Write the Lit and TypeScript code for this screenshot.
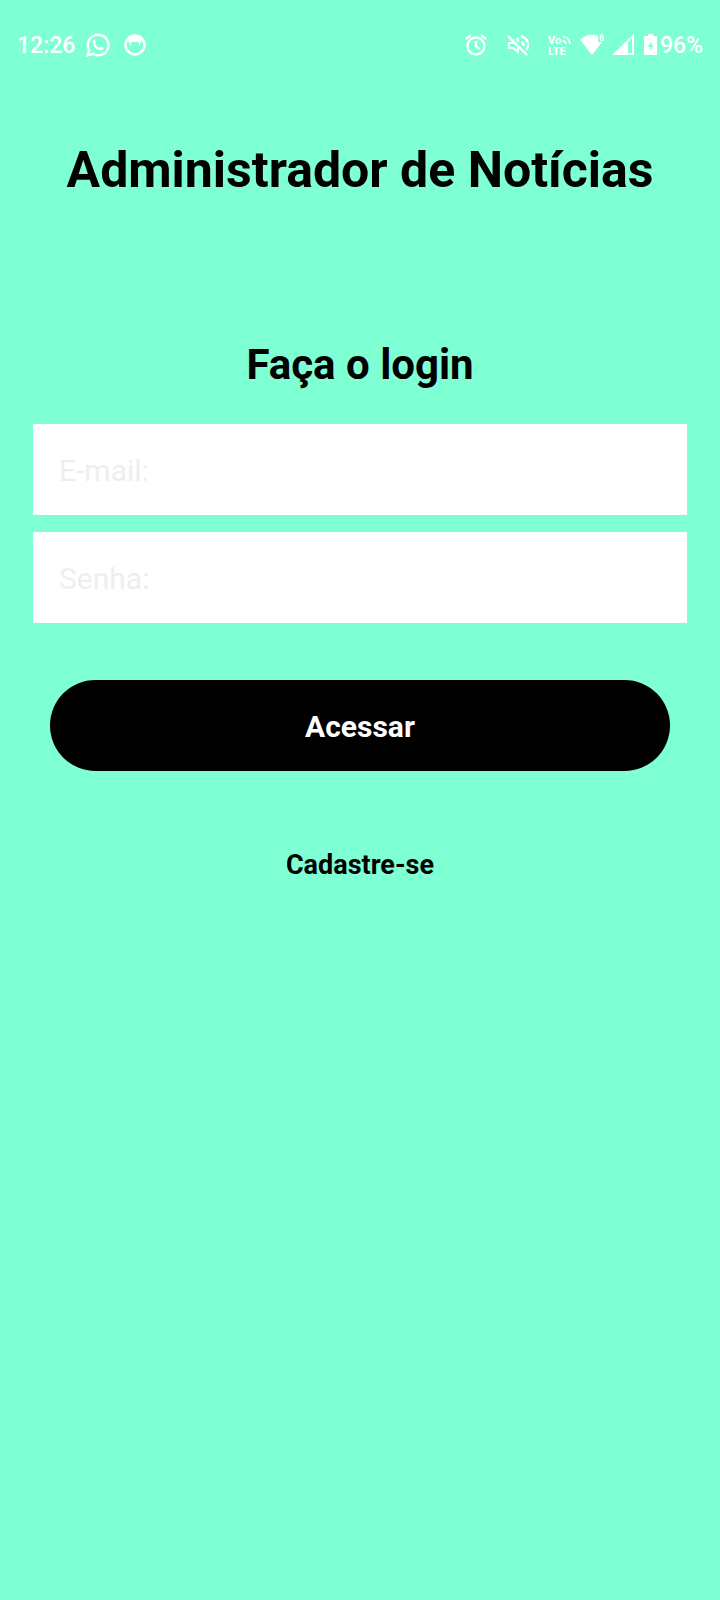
import { LitElement, html, css } from "lit";
import { customElement } from "lit/decorators.js";

@customElement("status-bar")
class StatusBar extends LitElement {
  static styles = css`
    :host {
      display: flex;
      justify-content: space-between;
      align-items: center;
      height: 90px;
      padding: 0 17px;
      box-sizing: border-box;
      color: #fff;
      font: 500 23px/28px Roboto, sans-serif;
    }
    .group {
      display: flex;
      align-items: center;
    }
    .left {
      gap: 11px;
    }
    .label {
      padding-top: 2px;
    }
    .left .icon + .icon {
      margin-left: 2px;
    }
    .icon {
      display: block;
      width: 24px;
      height: 24px;
      fill: none;
      stroke: #fff;
      stroke-width: 2.4;
    }
    .solid {
      fill: #fff;
      stroke: none;
    }
    .spaced {
      margin-right: 18px;
    }
    .near {
      margin-right: 8px;
    }
    .narrow {
      width: 16px;
      margin: 0 1px 0 7px;
    }
    .small {
      font: 700 11px Roboto, sans-serif;
    }
    .tiny {
      font: 700 9px Roboto, sans-serif;
    }
  `;

  render() {
    return html`
      <div class="group left">
        <span class="label">12:26</span>
        <svg class="icon" viewBox="0 0 24 24" aria-hidden="true">
          <path d="M1.600 22.400 L3.200 17 A10.300 10.300 0 1 1 7 20.900 Z" />
          <path class="solid" d="M8.7 6.5 C8 6.3 6.5 7.4 6.5 9.2 C6.6 12.8 11.5 17.3 15 17.3 C16.7 17.2 17.8 16 17.7 14.7 L14.9 13.3 L13.5 15 C11.6 14.2 9.9 12.6 9 10.8 L10.1 9.4 Z" />
        </svg>
        <svg class="icon" viewBox="0 0 24 24" aria-hidden="true">
          <circle cx="12" cy="12" r="9.5" />
          <path class="solid" d="M5 4.500 Q12 -1 19 4.500 L18.500 9.500 Q15.500 10 14 8.500 Q12 10 10 8.500 Q8.500 10 5.500 9.500 Z" />
          <path stroke-width="1" d="M7.500 9 V12.500 M16.500 9 V12.500" />
        </svg>
      </div>
      <div class="group">
        <svg class="icon spaced" viewBox="0 0 24 24" aria-hidden="true">
          <circle cx="12" cy="13" r="8.500" />
          <path d="M12 8 V13.500 L15.500 16 M2 6 L7 2 M17 2 L22 6" />
        </svg>
        <svg class="icon spaced" viewBox="0 0 24 24" aria-hidden="true">
          <path d="M2 3 L21 22" />
          <path stroke-width="2" d="M8.500 10 H3 V15 H7.500 L12 19 V14" />
          <path class="solid" d="M9.500 6.500 L13 3.500 V10 Z" />
          <path d="M15.500 8.500 Q17.500 10 17.500 13 M15 3 Q22 5.500 22 12 Q22 14.500 20.500 17" />
        </svg>
        <svg class="icon near" viewBox="0 0 24 24" aria-hidden="true">
          <text class="solid small" x="0" y="11">Vo</text>
          <text class="solid small" x="0" y="22">LTE</text>
          <path stroke-width="1.500" d="M14.500 7.500 Q17.500 8 18 11 M15 3.500 Q21.500 4.500 22 11" />
        </svg>
        <svg class="icon near" viewBox="0 0 24 24" aria-hidden="true">
          <path class="solid" d="M0 6.500 Q8 0 18 2.500 V9 H22 L12 22 Z" />
          <text class="solid tiny" x="19" y="8">6</text>
        </svg>
        <svg class="icon" viewBox="0 0 24 24" aria-hidden="true">
          <path class="solid" fill-rule="evenodd" d="M0 22 L22 1 V22 Z M16 9 V20 H20 V5 Z" />
        </svg>
        <svg class="icon narrow" viewBox="0 0 16 24" aria-hidden="true">
          <path class="solid" fill-rule="evenodd" d="M5 1 H10 V3 H13 Q14 3 14 4 V21 Q14 22 13 22 H2 Q1 22 1 21 V4 Q1 3 2 3 H5 Z M8.500 8 L5 14 H7 V18 L10.500 12 H8.500 Z" />
        </svg>
        <span class="label">96%</span>
      </div>
    `;
  }
}

@customElement("app-root")
class AppRoot extends LitElement {
  static styles = css`
    :host {
      display: block;
      min-height: 100vh;
      background: #7fffd4;
      color: #000;
      font-family: Roboto, sans-serif;
    }
    .content {
      display: flex;
      flex-direction: column;
      align-items: center;
      padding: 51px 33px;
    }
    h1,
    h2 {
      margin: 0;
      font-weight: 700;
      text-align: center;
    }
    h1 {
      font-size: 50px;
      line-height: 58px;
    }
    h2 {
      margin-top: 141px;
      font-size: 42px;
      line-height: 50px;
    }
    form {
      display: flex;
      flex-direction: column;
      align-self: stretch;
      gap: 17px;
      margin-top: 34px;
    }
    input,
    button {
      height: 91px;
      box-sizing: border-box;
      border: 0;
      font-family: inherit;
      font-size: 30px;
    }
    input {
      width: 100%;
      padding: 1px 26px 0;
      border-radius: 0;
      background: #fff;
      color: #000;
    }
    input::placeholder {
      color: #f0edf0;
      opacity: 1;
    }
    button {
      margin: 40px 17px 0;
      padding: 1px 0 0;
      border-radius: 46px;
      background: #000;
      color: #fff;
      font-weight: 700;
    }
    a {
      margin-top: 77px;
      color: #000;
      font-size: 27px;
      font-weight: 700;
      line-height: 34px;
      text-decoration: none;
    }
  `;

  render() {
    return html`
      <status-bar></status-bar>
      <main class="content">
        <h1>Administrador de Notícias</h1>
        <h2>Faça o login</h2>
        <form @submit=${(e: Event) => e.preventDefault()}>
          <input type="email" aria-label="E-mail" placeholder="E-mail:" />
          <input type="password" aria-label="Senha" placeholder="Senha:" />
          <button type="submit">Acessar</button>
        </form>
        <a href="#cadastro">Cadastre-se</a>
      </main>
    `;
  }
}
